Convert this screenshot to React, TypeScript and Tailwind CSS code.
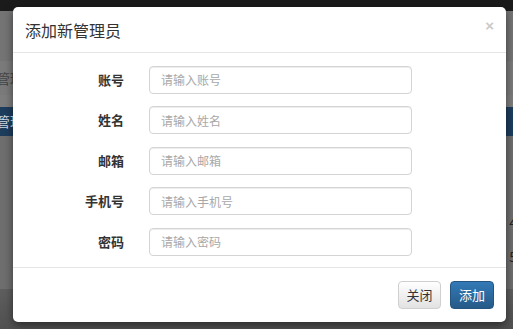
const fields = [
  { label: '账号', placeholder: '请输入账号' },
  { label: '姓名', placeholder: '请输入姓名' },
  { label: '邮箱', placeholder: '请输入邮箱' },
  { label: '手机号', placeholder: '请输入手机号' },
  { label: '密码', placeholder: '请输入密码', type: 'password' },
];

const font = { fontFamily: '"Noto Sans CJK SC", "Noto Sans", "Liberation Sans", sans-serif' };

export default function App() {
  return (
    <div className="relative w-[513px] h-[329px] overflow-hidden bg-[#6f6f6f]" style={font}>
      {/* dimmed page behind the modal */}
      <div className="flex flex-col h-full">
        <div className="h-[11px] bg-[#1b1b1b]" />
        <div className="h-[50px] bg-[#747474]" />
        <div className="h-[34px] bg-[#7a7a7a] flex items-center">
          <span className="-ml-[4px] text-[14px] text-[#444]">管理</span>
        </div>
        <div className="h-[12px] bg-[#7d7d7d]" />
        <div className="h-[29px] bg-[#1d3d5d] flex items-center">
          <span className="-ml-[4px] text-[14px] text-[#cfd8e2]">管理</span>
        </div>
        <div className="flex-1 bg-[#6e6e6e] flex flex-col items-end">
          <div className="h-[76px]" />
          <span className="-mr-[4px] text-[14px] leading-[20px] text-[#222]">4</span>
          <div className="h-[14px]" />
          <span className="-mr-[4px] text-[14px] leading-[20px] text-[#222]">5</span>
        </div>
        <div className="h-[40px] bg-gradient-to-b from-[#5e5e5e] to-[#505050]" />
      </div>

      {/* modal */}
      <div className="absolute left-[13px] top-[7px] w-[493px] h-[315px] bg-white rounded-[5px] shadow-[0_3px_9px_rgba(0,0,0,0.5)] flex flex-col">
        <div className="h-[46px] border-b border-[#e5e5e5] flex items-center justify-between pl-[12px] pr-[12px]">
          <h4 className="text-[16px] text-[#333] leading-none">添加新管理员</h4>
          <span className="text-[15px] font-bold text-[#cacaca] leading-none -mt-[8px]" style={{ fontFamily: '"Liberation Sans", sans-serif' }}>
            ×
          </span>
        </div>

        <div className="h-[214px] pt-[12.5px] flex flex-col gap-[12.5px]">
          {fields.map((f) => (
            <div key={f.label} className="flex items-center">
              <label className="w-[111px] text-right text-[13px] font-bold text-[#333]">{f.label}</label>
              <input
                type={f.type ?? 'text'}
                placeholder={f.placeholder}
                className="ml-[25px] w-[263px] h-[28px] px-[11px] rounded-[4px] border border-[#d4d4d4] text-[12px] text-[#555] placeholder:text-[#a8a8a8] shadow-[inset_0_1px_1px_rgba(0,0,0,0.075)] outline-none"
              />
            </div>
          ))}
        </div>

        <div className="flex-1 border-t border-[#e5e5e5] flex items-start justify-end gap-[9px] pt-[13px] pr-[12px]">
          <button className="w-[43px] h-[28px] rounded-[4px] border border-[#cfcfcf] bg-gradient-to-b from-white to-[#e2e2e2] text-[13px] text-[#333]">
            关闭
          </button>
          <button className="w-[44px] h-[28px] rounded-[4px] border border-[#245580] bg-gradient-to-b from-[#337ab7] to-[#265a88] text-[13px] text-white">
            添加
          </button>
        </div>
      </div>
    </div>
  );
}
